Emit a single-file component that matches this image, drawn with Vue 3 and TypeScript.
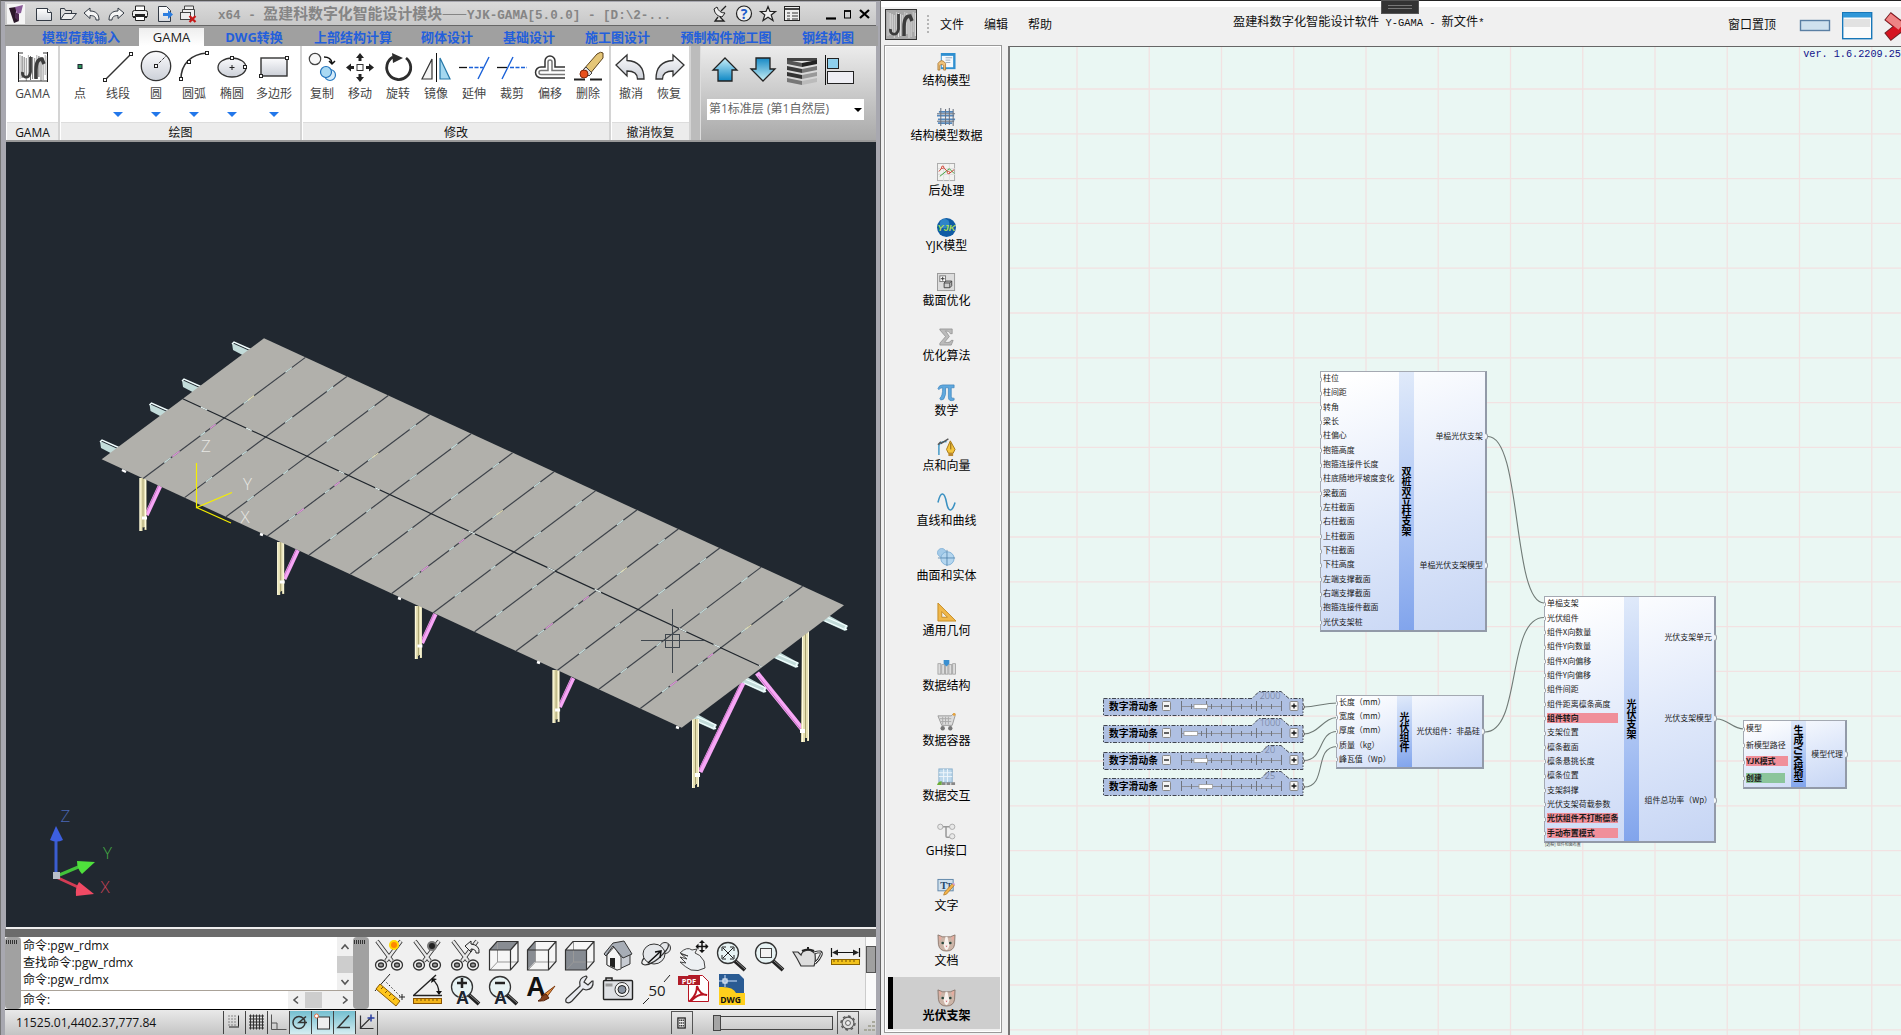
<script setup lang="ts">
interface Tool { icon: string; label: string; drop?: boolean; wide?: boolean }
interface Group { name: string; width: number; tools: Tool[] }
interface Port { text: string; tone?: 'red' | 'green' }
interface GraphNode {
  x: number; y: number; w: number; h: number; left: number
  title: string; inputs: Port[]; outputs: string[]
}
interface Slider { y: number; value: string; thumb: number; tagWide: boolean }

const ports = (s: string): Port[] =>
  s.split('|').map((t) => {
    if (t.startsWith('!')) return { text: t.slice(1), tone: 'red' as const }
    if (t.startsWith('+')) return { text: t.slice(1), tone: 'green' as const }
    return { text: t }
  })

const quickIcons: string[] = [
  '<path d="M1.500 4.500v12h15v-8l-4-4z" fill="url(#paper)" stroke="#333a44"/><path d="M12.500 4.500v4h4" fill="#fff" stroke="#333a44"/>',
  '<path d="M1.500 15.500v-11h4l1 2h6v3" fill="#ddd" stroke="#333a44"/><path d="M1.500 15.500l4-6h12l-5 6z" fill="#eee" stroke="#333a44"/>',
  '<path d="M1 9l6-5v3c6 0 9 3 9 9h-3c0-3-2-4.500-6-4.500v3z" fill="#f4f4f4" stroke="#333a44"/>',
  '<path d="M17 9l-6-5v3c-6 0-9 3-9 9h3c0-3 2-4.500 6-4.500v3z" fill="#f4f4f4" stroke="#333a44"/>',
  '<path d="M4.500 7v-5h9v5" fill="#fff" stroke="#222"/><rect x="1.500" y="6.500" width="15" height="7" rx="2" fill="#eee" stroke="#222"/><path d="M2 13h14M4 11h10" stroke="#222" stroke-width="2"/><path d="M4.500 12.500h9v4h-9z" fill="#fff" stroke="#222"/>',
  '<path d="M3.500 2.500h8l4 4v11h-12z" fill="url(#paper)" stroke="#333a44"/><path d="M8 9h5V6l5 4.500-5 4.500v-3H8z" fill="#2b7de0"/>',
  '<path d="M5.500 6v-4h9v4M3.500 8.500v-3h12v8" fill="#eee" stroke="#444"/><rect x="1.500" y="8.500" width="10" height="7" fill="#eee" stroke="#444"/><path d="M10.500 12l6 6M16.500 12l-6 6" stroke="#c81818" stroke-width="2.200"/>',
]

const titleIcons: string[] = [
  '<path d="M3 5q1 7 8 8l3-4q-6 0-8-6z" fill="#eee" stroke="#222"/><path d="M10 7l5-5M9 13l4 4H4l3-4" fill="#ddd" stroke="#222" stroke-width="1.300"/>',
  '<circle cx="9" cy="9.500" r="7.500" fill="#eee" stroke="#222" stroke-width="1.200"/><text x="9" y="14.500" font-size="14" font-weight="700" fill="#1f5bcb" text-anchor="middle" font-family="Open Sans">?</text>',
  '<path d="M9 2.500l2 5h5.500l-4.300 3.500 1.800 5.500-5-3.300-5 3.300 1.800-5.500L1.500 7.500H7z" fill="#eee" stroke="#222" stroke-width="1.200"/>',
  '<rect x="1.500" y="2.500" width="15" height="14" fill="#eee" stroke="#222"/><path d="M2 5h14" stroke="#444" stroke-width="2"/><path d="M4 9h3M4 12h3M4 15h3M9 9h6M9 12h6M9 15h6" stroke="#333"/>',
]

const tabs = [
  { t: '模型荷载输入', w: 116 }, { t: 'GAMA', w: 65, on: true }, { t: 'DWG转换', w: 100 },
  { t: '上部结构计算', w: 98 }, { t: '砌体设计', w: 90 }, { t: '基础设计', w: 74 },
  { t: '施工图设计', w: 103 }, { t: '预制构件施工图', w: 114 }, { t: '钢结构图', w: 90 },
]

const h = (x: number, y: number) => `<rect x="${x - 1.5}" y="${y - 1.5}" width="3" height="3" fill="#fff" stroke="#222"/>`
const gamaArt = (ink: string) => {
  let s = ''
  for (let i = 0; i < 14; i++) s += `<path d="M${3 + i * 2.1} ${3 + ((i * 5) % 4)}v${24 - ((i * 7) % 5)}" stroke="${ink}" stroke-width=".9" opacity="${0.45 + ((i * 3) % 4) / 8}"/>`
  return s + '<path d="M13.500 5v15q-1 6-5.500 5q-3-1-2.500-5" fill="none" stroke="#3c3c3c" stroke-width="2.800"/><path d="M19 27v-9q0-11 6-11l2 5" fill="none" stroke="#3c3c3c" stroke-width="3.500"/>'
}

const toolArt: Record<string, string> = {
  gama: `<g transform="translate(1 2)"><path d="M1.500 0v30M30.500 0v30" stroke="#111"/><path d="M1 1h5M26 1h5M1 29h30" stroke="#333"/>${gamaArt('#333')}</g>`,
  point: '<rect x="15" y="14.500" width="4" height="4" fill="#2a9a5a" stroke="#223"/>',
  line: `<path d="M4 30L30 4" stroke="#333" stroke-width="1.400"/>${h(4, 30)}${h(30, 4)}`,
  circle: `<circle cx="17" cy="16" r="14.700" fill="url(#steel)" stroke="#333" stroke-width="1.300"/><path d="M17 16L27 6" stroke="#333" stroke-dasharray="3 1.500"/>${h(17, 16)}`,
  arc: `<path d="M4 29C4 14 14 4 30 3" fill="none" stroke="#333" stroke-width="1.600"/>${h(4, 29)}${h(12, 12)}${h(30, 3)}`,
  ellipse: `<ellipse cx="17" cy="17.500" rx="14" ry="9.500" fill="url(#steel)" stroke="#333" stroke-width="1.300"/><path d="M14.500 17.500h5M17 15v5" stroke="#222"/>${h(17, 8)}${h(30, 17)}`,
  rect: `<rect x="4" y="8" width="26" height="18" fill="url(#steel)" stroke="#333" stroke-width="1.400"/>${h(4, 26)}${h(30, 8)}`,
  copy: '<circle cx="10" cy="9" r="5.700" fill="#f8f8f8" stroke="#444" stroke-width="1.200"/><path d="M19 7q7 0 8 6M24 11l3 3 3-3" fill="none" stroke="#111" stroke-width="1.500"/><circle cx="25" cy="25" r="5.500" fill="#d5ecfa" stroke="#2678c0" stroke-width="1.200"/><circle cx="21" cy="22" r="5.500" fill="#a9d9f3" stroke="#1d6fba" stroke-width="1.200"/>',
  move: '<rect x="14" y="14.500" width="6" height="6" fill="#fff" stroke="#333"/><path d="M17 3l4 5h-2.500v3h-3V8H13zM17 32l4-5h-2.500v-3h-3v3H13zM3 17.500l5-4V16h3v3H8v2.500zM31 17.500l-5-4V16h-3v3h3v2.500z" fill="#222"/>',
  rotate: '<path d="M12 7A12 12 0 1 0 25 8" fill="none" stroke="#2d2d2d" stroke-width="2.800"/><path d="M11 3l11 5-10 5z" fill="#2d2d2d"/>',
  mirror: '<path d="M13 9v20H3z" fill="#f4f4f4" stroke="#333" stroke-width="1.200"/><path d="M17.500 3v29" stroke="#111"/><path d="M21 8v21h10z" fill="#a5d8f0" stroke="#2678a8" stroke-width="1.200"/>',
  extend: '<path d="M2 17.500h8" stroke="#111" stroke-width="1.300"/><path d="M12 17.500h14" stroke="#1a61d8" stroke-width="1.300" stroke-dasharray="4 1.500"/><path d="M21 29L32 7" stroke="#1a61d8" stroke-width="1.400"/>',
  trim: '<path d="M2 17.500h10" stroke="#111" stroke-width="1.300"/><path d="M15 17.500h17" stroke="#1a61d8" stroke-width="1.300" stroke-dasharray="4 1.500"/><path d="M7 29L18 7" stroke="#1a61d8" stroke-width="1.400"/>',
  offset: '<path d="M32 17H22V11a5 5 0 0 0-10 0v6H8a5.500 5.500 0 0 0 0 11h24" fill="none" stroke="#333" stroke-width="1.500"/><path d="M32 20.500H19V12a2 2 0 0 0-4 0v8.500H8a2 2 0 0 0 0 4h24" fill="none" stroke="#777" stroke-width="1.500"/>',
  erase: '<path d="M3 29.500h11M19 29.500h12" stroke="#222" stroke-width="2"/><path d="M12 20L26 4q4-3 6-1v5L18 25z" fill="#e5c677" stroke="#5c431d"/><path d="M12 20l3-3 6 6-3 3z" fill="#ddd" stroke="#444"/><circle cx="13" cy="24" r="4" fill="#e8501c" stroke="#84270a"/>',
  undo: '<path d="M2 15L13 5v5.500q17 1 17 18.500h-6.500q0-8-10.500-8v5z" fill="url(#steel)" stroke="#333" stroke-width="1.300"/>',
  redo: '<path d="M32 15L21 5v5.500q-17 1-17 18.500h6.500q0-8 10.500-8v5z" fill="url(#steel)" stroke="#333" stroke-width="1.300"/>',
}

const groups: Group[] = [
  { name: 'GAMA', width: 54, tools: [{ icon: 'gama', label: 'GAMA', wide: true }] },
  { name: '绘图', width: 242, tools: [
    { icon: 'point', label: '点' }, { icon: 'line', label: '线段', drop: true }, { icon: 'circle', label: '圆', drop: true },
    { icon: 'arc', label: '圆弧', drop: true }, { icon: 'ellipse', label: '椭圆', drop: true }, { icon: 'rect', label: '多边形', drop: true, wide: true }] },
  { name: '修改', width: 309, tools: [
    { icon: 'copy', label: '复制' }, { icon: 'move', label: '移动' }, { icon: 'rotate', label: '旋转' }, { icon: 'mirror', label: '镜像' },
    { icon: 'extend', label: '延伸' }, { icon: 'trim', label: '裁剪' }, { icon: 'offset', label: '偏移' }, { icon: 'erase', label: '删除' }] },
  { name: '撤消恢复', width: 80, tools: [{ icon: 'undo', label: '撤消' }, { icon: 'redo', label: '恢复' }] },
]

const bands = [0, 1, 2, 3].map((i) => {
  const y = 5 + i * 6
  return `<path d="M1 ${y}l15 3v4L1 ${y + 4}z" fill="#${['555', '3a3a3a', '333', '777'][i]}"/><path d="M31 ${y}l-15 3v4l15-3z" fill="#${['222', '777', '999', 'bbb'][i]}"/>`
}).join('')
const layerIcons: string[] = [
  '<path d="M16 3L28 15h-5v11H9V15H4z" fill="url(#blueUp)" stroke="#222" stroke-width="1.300"/>',
  '<path d="M16 26L28 14h-5V3H9v11H4z" fill="url(#blueDown)" stroke="#222" stroke-width="1.300"/>',
  `<path d="M1 3h30v3H1z" fill="#444"/>${bands}`,
  '<path d="M1.500 0v30" stroke="#111"/><rect x="3.500" y="3.500" width="11" height="10" fill="#8ed0ee" stroke="#222"/><rect x="3.500" y="16.500" width="26" height="12" fill="#eeeef4" stroke="#222"/>',
]

const lens = '<path d="M19 21l10 9" stroke="#222" stroke-width="4"/><path d="M20 21l9 8" stroke="#888" stroke-width="1"/><circle cx="12" cy="13" r="10.500" fill="#e7f3f4" stroke="#333" stroke-width="1.300"/>'
const snip = (extra: string) => `<path d="M3 1l15 20M27 1L12 21" stroke="#333" stroke-width="4"/><path d="M3 1l15 20M27 1L12 21" stroke="#e8e8e8" stroke-width="2.400"/><g fill="#f2f2f2" stroke="#333" stroke-width="1.300"><ellipse cx="7" cy="25" rx="5.500" ry="5"/><ellipse cx="23" cy="25" rx="5.500" ry="5"/><ellipse cx="7" cy="25" rx="2.500" ry="2" fill="#999"/><ellipse cx="23" cy="25" rx="2.500" ry="2" fill="#999"/></g>${extra}`
const cube = (face: string) => `<path d="M9 1.500h21v20l-7 8.500H1.500V10z" fill="#f6f6f6"/>${face}<path d="M9.500 2v20L2 30M9.500 22H30" stroke="#999" fill="none"/><path d="M9 1.500h21v20l-7.500 8.500H1.500V10zM1.500 10h21v20M22.500 10L30 1.500" fill="none" stroke="#333" stroke-width="1.200"/>`
const dockArt: string[] = [
  snip('<circle cx="20" cy="5" r="5" fill="#ffd900"/><circle cx="20" cy="5" r="3" fill="#f80"/>'),
  snip('<circle cx="20" cy="6" r="5" fill="#777"/><circle cx="20" cy="6" r="3" fill="#222"/>'),
  snip('<path d="M15 6l6-5v3q9 1 8 9h-3q0-4-5-4v3z" fill="#eee" stroke="#222"/>'),
  cube('<path d="M9 1.500h21L22.500 10h-21z" fill="#888c92"/>'),
  cube('<path d="M9 1.500v20L1.500 30V10z" fill="#888c92"/>'),
  cube('<path d="M1.500 10h21v20h-21z" fill="#868b92"/>'),
  '<path d="M5 14v11l10 5 13-6V12z" fill="#c7cbd2" stroke="#333"/><path d="M5 15l7-8 7 10v12l-4 1L5 25z" fill="#f5f5f5" stroke="#444"/><path d="M2 14L11 3l11-2 8 13-9 4-10-12-7 10z" fill="#a7adb6" stroke="#333"/><path d="M8 18h5v10l-5-2z" fill="#222"/>',
  '<circle cx="25" cy="8" r="5.500" fill="#e5e7ea" stroke="#333"/><ellipse cx="14" cy="14" rx="11" ry="10" fill="#e5e7ea" stroke="#333"/><path d="M4 18q-5 6 1 7 9-1 18-11 7-7 5-10" fill="none" stroke="#333" stroke-width="1.200"/><path d="M8 23L21 11M15 12l6-1-1 7" stroke="#111" fill="none" stroke-width="1.500"/>',
  '<path d="M2 13q7-7 12-3l5-1-2 4q5 1 9 8l1 7q-7 4-14 2-6-3-11-8l6 1-6-6 7 2-6-5 7 2z" fill="#edf0f3" stroke="#444"/><path d="M24 1v11M18.500 6.500h11" stroke="#111" stroke-width="1.500"/><path d="M24 0l3 3h-6zM24 13l3-3h-6zM17.500 6.500l3-3v6zM30.500 6.500l-3-3v6z" fill="#111"/>',
  lens + '<path d="M7 8l10 10M17 8L7 18" stroke="#222"/><path d="M6 11V7h4M14 7h4v4M18 15v4h-4M10 19H6v-4" fill="none" stroke="#222"/>',
  lens + '<rect x="6.500" y="8.500" width="11" height="9" fill="#f3f3f3" stroke="#444"/>',
  '<path d="M22 13q9-3 7 2-2 5-6 8" fill="none" stroke="#333" stroke-width="3"/><path d="M9 26q-4-8-8-14h5l3 3q1-4 7-5 5 1 7 4 1 7-1 12z" fill="#ddd" stroke="#333" stroke-width="1.200"/><path d="M10 11q6-3 12 0M16 7v3" stroke="#222" stroke-width="2" fill="none"/><path d="M22 13q9-3 7 2-2 5-6 8" stroke="#f2f2f2" stroke-width="1" fill="none"/>',
  '<path d="M1.500 8v9M29.500 8v9M3 12.500h25" stroke="#111" stroke-width="1.200"/><path d="M2 12.500l6-3v6zM29 12.500l-6-3v6z" fill="#222"/><rect x="1.500" y="19.500" width="28" height="5" fill="#f2c21b" stroke="#8a6300"/><path d="M4 20v2M8 20v2M12 20v2M16 20v2M20 20v2M24 20v2" stroke="#7a5400"/>',
  '<path d="M1 17L16 0" stroke="#222"/><path d="M10 6l17 17" stroke="#222" stroke-dasharray="1.500 2"/><path d="M28 20v6M25 23h6" stroke="#222"/><path d="M6 10l20 17-4 5L2 15z" fill="#ffc61c" stroke="#8a5a00"/><path d="M9 13l-2 2M13 17l-2 2M17 20l-2 2M21 24l-2 2" stroke="#7a5400"/>',
  '<path d="M1 21.500h29M2 21L24 1" stroke="#222" stroke-width="1.400"/><path d="M20 5q7 5 7 15" fill="none" stroke="#222" stroke-width="1.400"/><path d="M19 9l1-5 5 1zM24 17l3 4 3-4z" fill="#111"/><rect x="1.500" y="24.500" width="28" height="5" fill="#f2b41b" stroke="#8a5300"/><path d="M5 25v2M9 25v2M13 25v2M17 25v2M21 25v2M25 25v2" stroke="#7a5400"/>',
  lens + '<path d="M7 9h10M12 4v10" stroke="#222" stroke-width="2.500"/><text x="12.500" y="29.500" font-size="18" font-weight="700" fill="#1c2430" stroke="#fff" stroke-width=".6" paint-order="stroke" text-anchor="middle" font-family="Liberation Sans">A</text>',
  lens + '<path d="M7 9h10" stroke="#222" stroke-width="2.500"/><text x="12.500" y="29.500" font-size="18" font-weight="700" fill="#1c2430" stroke="#fff" stroke-width=".6" paint-order="stroke" text-anchor="middle" font-family="Liberation Sans">A</text>',
  '<text x="10" y="22" font-size="27" font-weight="700" fill="#111" text-anchor="middle" font-family="Liberation Sans">A</text><path d="M29 12l-9 12-3-3z" fill="#e8913c" stroke="#7d3a10"/><path d="M20 20l3 4q-5 4-11 3 4-2 4-5z" fill="#84401c" stroke="#552109"/>',
  '<path d="M2 28q-1-3 2-5L16 12q-2-8 6-10l1 1-3 5 4 3 4-4h1q1 8-7 9l-3-1L8 27q-3 3-6 1z" fill="#e9ebf0" stroke="#333" stroke-width="1.200"/>',
  '<rect x="1.500" y="6.500" width="29" height="19" rx="1" fill="#dfe1e5" stroke="#222" stroke-width="1.400"/><path d="M4 6V4h6v2" fill="none" stroke="#222" stroke-width="1.500"/><rect x="3.500" y="9.500" width="7" height="3" fill="#999"/><circle cx="20" cy="15.500" r="7" fill="#f7f7f7" stroke="#333"/><circle cx="20" cy="15.500" r="4" fill="#8a94a3" stroke="#222"/>',
  '<path d="M3 30l6-6M24 8l6-7" stroke="#222"/><text x="17" y="22" font-size="15" fill="#222" text-anchor="middle" font-family="Open Sans">50</text>',
  '<path d="M10.500 1.500h14l6 6v20h-20z" fill="#fff" stroke="#b81422"/><path d="M13 26q6-6 6-14 3 9 10 9-8-2-15 5z" fill="none" stroke="#b81422" stroke-width="2"/><rect x="0" y="2" width="22" height="9" fill="#b01c28"/><text x="11" y="9.500" font-size="7.500" font-weight="700" fill="#fff" text-anchor="middle" font-family="Open Sans">PDF</text>',
  '<path d="M3 0h20l5 5v25H3z" fill="#2a5b93"/><path d="M3 13q14-1 17 6h9v12H3z" fill="#ffcf1c"/><path d="M9 1v12M3 7h18" stroke="#cfe4ff"/><rect x="7" y="5" width="4" height="4" fill="none" stroke="#fff"/><text x="14.500" y="28.500" font-size="8.500" font-weight="700" fill="#111" text-anchor="middle" font-family="Open Sans">DWG</text>',
]
const dockRows = [dockArt.slice(0, 13), dockArt.slice(13)]

const statusArt = [
  { on: false, art: '<path d="M5 4v11M8 4v11M11 4v11" stroke="#333" stroke-dasharray="1 2"/><path d="M14.500 4v11M5 15.500h10" stroke="#222"/>' },
  { on: false, art: '<path d="M4.500 3v15M7.500 3v15M10.500 3v15M13.500 3v15M16.500 3v15M3 4.500h15M3 7.500h15M3 10.500h15M3 13.500h15M3 16.500h15" stroke="#333"/>' },
  { on: false, art: '<path d="M3.500 3v15h15M4 11.500h5v6" fill="none" stroke="#555"/>' },
  { on: true, art: '<circle cx="9" cy="11" r="6" fill="none" stroke="#333" stroke-width="1.500"/><path d="M16 5L9 11h8" fill="none" stroke="#333" stroke-width="1.500"/>' },
  { on: true, art: '<rect x="5.500" y="5.500" width="12" height="12" fill="#eee" stroke="#333"/><circle cx="4.500" cy="4.500" r="2" fill="#fff" stroke="#e0704a"/>' },
  { on: true, art: '<path d="M15 4L4 16h12" fill="none" stroke="#333" stroke-width="1.500"/>' },
  { on: false, art: '<path d="M4.500 4v13h13M4 17L14 7" fill="none" stroke="#333" stroke-width="1.200"/><path d="M15 3v7M11.500 6.500h7" stroke="#2a3ea0" stroke-width="1.500"/>' },
]

const cat = '<path d="M1 2l5 2h8l5-2-.5 10q-1 7-8.500 7t-8.500-7z" fill="#ccb5a8" stroke="#7d675c" stroke-width=".8"/><path d="M9 4h2l2 9q-1 5-3 5t-3-5z" fill="#f8f2ee"/><path d="M2 3l3 2-2 4zM18 3l-3 2 2 4z" fill="#e9ab9f"/><circle cx="6" cy="10.500" r="1.400" fill="#2e4a40"/><circle cx="14" cy="10.500" r="1.400" fill="#2e4a40"/><path d="M9 13.500h2l-1 1.500z" fill="#c56"/>'
const sideItems = [
  { t: '结构模型', a: '<rect x="4" y="0" width="15.500" height="17" fill="#2e8fd0"/><rect x="5" y="3" width="12" height="12" fill="#f4f9fd"/><path d="M9 5h7M9 7.500h5M9 10h5" stroke="#9ab"/><path d="M1 18V11q4-6 8 0v7H7v-5q-2-2-4 0v5z" fill="#f0c279" stroke="#a4702c" stroke-width=".8"/>' },
  { t: '结构模型数据', a: '<path d="M2 4h15M0 8h18M1 12h18M1 16h15" stroke="#5488bd" stroke-width="1.800"/><path d="M4 0v19M9 1v17M13 0v18M17 1v18M0 6h19M0 14h18" stroke="#6b7380" stroke-width="1.100"/>' },
  { t: '后处理', a: '<rect x=".5" y=".5" width="18" height="18" fill="#f2f2f0" stroke="#aaa"/><path d="M1 6h18M1 12h18M7 1v18M13 1v18" stroke="#ddd"/><path d="M3 14l10-8 5 5" fill="none" stroke="#3ba13b"/><path d="M2 9l4-5 7 7 5-4" fill="none" stroke="#d03a2c"/><g fill="#fff" stroke="#d03a2c"><circle cx="6" cy="4.500" r="1.200"/><circle cx="12" cy="10" r="1.200"/></g>' },
  { t: 'YJK模型', a: '<circle cx="10" cy="10" r="10" fill="#0f5ba4"/><circle cx="8" cy="6" r="5" fill="#2e84c8"/><text x="10" y="14" font-size="10" font-weight="700" font-style="italic" fill="#a9dc5a" text-anchor="middle" font-family="Liberation Sans">YJK</text>' },
  { t: '截面优化', a: '<rect x=".5" y=".5" width="18" height="18" fill="#ddd" stroke="#999"/><rect x="3" y="3" width="6" height="6" fill="#fff" stroke="#777"/><path d="M6 4v4M4 6h4" stroke="#333"/><path d="M7.500 10.500h6v5h-6zM7.500 10.500l2-2h6l-2 2M15.500 8.500v5l-2 2" fill="#ccc" stroke="#444"/>' },
  { t: '优化算法', a: '<path d="M3 1h13v5h-2q-1-3-5-3l4 6-5 6q6 1 7-2h2l-2 5H3v-2l6-7-6-7z" fill="#bbb" stroke="#888" stroke-width=".7"/>' },
  { t: '数学', a: '<path d="M1 6q1-4 5-4h12v3h-3v9q0 3 3 2v2q-6 2-6-3V5H9q1 8-2 12-4 2-4-1 3-2 3-11-3 0-4 2z" fill="#5fa8de" stroke="#3a80ba" stroke-width=".7"/>' },
  { t: '点和向量', a: '<path d="M2 18V8q2-5 8-4" fill="none" stroke="#3c95c5" stroke-width="1.500"/><path d="M1 7l3-3M4 6l8-5" stroke="#555" stroke-width="1.500"/><path d="M14 3l5 9-2 4h-5l-2-4z" fill="#f5c63e" stroke="#a87714"/><path d="M12 16h5v3h-5z" fill="#b88630"/><path d="M14.500 5v7" stroke="#855d12"/>' },
  { t: '直线和曲线', a: '<path d="M1 10C4-3 8-1 10 10S16 20 19 10" fill="none" stroke="#3a91c2" stroke-width="1.600"/>' },
  { t: '曲面和实体', a: '<circle cx="5" cy="5" r="4.500" fill="#a4cbe9" stroke="#8ab5d8"/><circle cx="11" cy="11" r="7" fill="#b4d6ef" stroke="#82b2d8"/><path d="M10.500 2v17M1 10.500h18" stroke="#477ca6" stroke-width=".8"/>' },
  { t: '通用几何', a: '<path d="M1 0v19h19z" fill="#f0b84b" stroke="#c58b24"/><path d="M5 9v6h6z" fill="#f0f0f0" stroke="#c58b24"/>' },
  { t: '数据结构', a: '<g fill="#ddd" stroke="#999" stroke-width=".8"><rect x="1" y="6" width="3" height="11"/><rect x="5" y="7" width="3" height="10"/><rect x="9" y="6" width="2.500" height="11"/><rect x="12.500" y="7" width="3" height="10"/><rect x="16.500" y="6" width="3" height="11"/></g><path d="M7 2h6v4l-3 3-3-3z" fill="#3a8fd0"/>' },
  { t: '数据容器', a: '<path d="M1 3h14l2-2h2v2l-3 10H5z" fill="#ddd" stroke="#999"/><path d="M3 6h12M4 9h11M6 4v8M9 4v8M12 4v8" stroke="#aaa"/><circle cx="6" cy="16" r="2.300" fill="#777"/><circle cx="14" cy="16" r="2.300" fill="#777"/><circle cx="18" cy="1.500" r="1.500" fill="#e8a33b"/>' },
  { t: '数据交互', a: '<rect x="2" y="1" width="14" height="14" fill="#bcd8ec" stroke="#8ab0cc"/><path d="M2 5h14M2 9h14M7 1v14M11 1v14" stroke="#eef6fb"/><path d="M0 18q1-4 5-4v4z" fill="#6cae37"/><path d="M5 16.500h14" stroke="#888" stroke-width="3" stroke-dasharray="4 1"/>' },
  { t: 'GH接口', a: '<path d="M4 4h12M9.500 4v10q0 1 1 1h5" fill="none" stroke="#999" stroke-width="1.600"/><g fill="#e8e8e8" stroke="#aaa"><circle cx="3.500" cy="4" r="2.800"/><circle cx="16" cy="4" r="2.800"/><circle cx="16" cy="14" r="2.800"/></g>' },
  { t: '文字', a: '<rect x="1" y="1.500" width="16" height="12" fill="#cfe0ee" stroke="#5f85a8"/><text x="7" y="12" font-size="11" font-weight="700" fill="#24486c" text-anchor="middle" font-family="Liberation Serif">T</text><text x="13" y="12" font-size="8" font-weight="700" fill="#24486c" text-anchor="middle" font-family="Liberation Serif">T</text><path d="M7 18l1-3 8-9 2 2-8 9z" fill="#f3b44c" stroke="#a86c18" stroke-width=".7"/><path d="M16 6l2-1 1 2-1 1z" fill="#d99ad0"/>' },
  { t: '文档', a: cat },
  { t: '光伏支架', a: cat, on: true },
]

/* ---- 3D model ---- */
const cols = 14
const seams = Array.from({ length: cols - 1 }, (_, i) => {
  const k = i + 1
  return { x1: 264 + k * 41.43, y1: 338.3 + k * 19.07, x2: 101.7 + k * 41.43, y2: 459.3 + k * 19.17, k }
})
const frames = [0, 1, 2, 3].map((k) => ({ dx: k * 137.7, dy: k * 64 }))
const leftBeams = [[232, 343], [182, 380], [149.5, 404], [100, 441]]
const rightBeams = [[823, 617], [774, 654], [742, 679], [692, 716]]

/* ---- node graph ---- */
const nodes: GraphNode[] = [
  { x: 1320, y: 371, w: 167, h: 261, left: 79, title: '双桩双立柱支架',
    inputs: ports('柱位|柱间距|转角|梁长|柱偏心|抱箍高度|抱箍连接件长度|柱底随地坪坡度变化|梁截面|左柱截面|右柱截面|上柱截面|下柱截面|下柱高度|左端支撑截面|右端支撑截面|抱箍连接件截面|光伏支架桩'),
    outputs: ['单榀光伏支架', '单榀光伏支架模型'] },
  { x: 1336, y: 695, w: 148, h: 74, left: 61, title: '光伏组件',
    inputs: ports('长度（mm）|宽度（mm）|厚度（mm）|质量（kg）|峰瓦值（Wp）'), outputs: ['光伏组件：非晶硅'] },
  { x: 1544, y: 596, w: 172, h: 247, left: 80, title: '光伏支架',
    inputs: ports('单榀支架|光伏组件|组件X向数量|组件Y向数量|组件X向偏移|组件Y向偏移|组件间距|组件距离檩条高度|!组件转向|支架位置|檩条截面|檩条悬挑长度|檩条位置|支架斜撑|光伏支架荷载参数|!光伏组件不打断檩条|!手动布置模式'),
    outputs: ['光伏支架单元', '光伏支架模型', '组件总功率（Wp）'] },
  { x: 1743, y: 720, w: 104, h: 69, left: 48, title: '生成YJK模型',
    inputs: ports('模型|新模型路径|!YJK模式|+创建'), outputs: ['模型代理'] },
]

const sliders: Slider[] = [
  { y: 689, value: '2000', thumb: 91, tagWide: true },
  { y: 716, value: '1000', thumb: 81, tagWide: true },
  { y: 742.5, value: '20', thumb: 91, tagWide: false },
  { y: 769, value: '25', thumb: 96, tagWide: false },
]
const outline = (s: Slider) =>
  s.tagWide ? 'M.5 9.500H149l7-7h22l8 7h14v17H.5z' : 'M.5 9.500H158l7-7h13l8 7h14v17H.5z'
const majors = [78, 103, 128, 153, 178]
const minors = [88, 98, 108, 118, 138, 148, 158, 168]
const wires = [
  'M1488 436.500C1522 436.500 1512 603 1544 603', 'M1485 732C1522 732 1506 617.500 1544 617.500',
  'M1304 707C1316 707 1324 703 1337 703', 'M1304 734C1318 734 1324 717.500 1337 717.500',
  'M1304 760.500C1324 760.500 1318 731.500 1337 731.500', 'M1304 787C1328 787 1313 746.500 1337 746.500',
  'M1717 719C1728 719 1732 729 1744 729',
]
const gridV = Array.from({ length: 12 }, (_, i) => 1077 + i * 72.25)
const gridH = Array.from({ length: 22 }, (_, i) => 89 + i * 44.8)
</script>

<template>
  <div class="screen">
    <svg class="defs" width="0" height="0">
      <defs>
        <linearGradient id="steel" x1="0" y1="0" x2="0" y2="1"><stop offset="0" stop-color="#fbfbfd" /><stop offset="1" stop-color="#ccd0d8" /></linearGradient>
        <linearGradient id="paper" x1="0" y1="0" x2="0" y2="1"><stop offset="0" stop-color="#fff" /><stop offset="1" stop-color="#d5d8dd" /></linearGradient>
        <linearGradient id="blueUp" x1="0" y1="0" x2="0" y2="1"><stop offset="0" stop-color="#c9f0fa" /><stop offset="1" stop-color="#0d87c4" /></linearGradient>
        <linearGradient id="blueDown" x1="0" y1="0" x2="0" y2="1"><stop offset="0" stop-color="#1689c6" /><stop offset="1" stop-color="#c9f0f4" /></linearGradient>
      </defs>
    </svg>

    <section class="cad">
      <header class="cad-title">
        <svg class="app-logo" viewBox="0 0 18 20"><rect width="18" height="20" fill="#f5f5f5" /><path d="M2 4l7-1v10l3 4-5 2-2-6z" fill="#2a1828" /><path d="M8 3l8-2-2 8-4 1z" fill="#8a5b98" /><path d="M8 8l4 2v7l-4-3z" fill="#4d2b50" /></svg>
        <div class="quick"><svg v-for="(a, i) in quickIcons" :key="i" viewBox="0 0 18 19" v-html="a" /></div>
        <div class="cad-name"><span class="lat">x64 - </span>盈建科数字化智能设计模块<span class="dash">——</span><span class="lat">YJK-GAMA[5.0.0] - [D:\2-...</span></div>
        <div class="title-icons"><svg v-for="(a, i) in titleIcons" :key="i" viewBox="0 0 18 19" v-html="a" /></div>
        <svg class="win-btns" width="46" height="14" viewBox="0 0 46 14"><path d="M1 11.500h10" stroke="#000" stroke-width="2.200" /><rect x="19.500" y="4" width="6" height="7" fill="none" stroke="#000" /><path d="M19 4h7" stroke="#000" stroke-width="1.600" /><path d="M35 3l9 8M44 3l-9 8" stroke="#000" stroke-width="2.200" /></svg>
      </header>
      <nav class="tabs"><span v-for="t in tabs" :key="t.t" :class="{ on: t.on }" :style="{ width: t.w + 'px' }">{{ t.t }}</span></nav>
      <div class="ribbon">
        <div v-for="g in groups" :key="g.name" class="group" :style="{ width: g.width + 'px' }">
          <div class="tools" :class="{ mid: g.tools.length === 1 }">
            <div v-for="t in g.tools" :key="t.label" class="tool" :class="{ wide: t.wide }">
              <svg viewBox="0 0 34 34" v-html="toolArt[t.icon]" />
              <span>{{ t.label }}</span>
              <i v-if="t.drop" />
            </div>
          </div>
          <div class="group-name">{{ g.name }}</div>
        </div>
        <div class="gap" />
        <div class="layers">
          <div class="layer-icons"><svg v-for="(a, i) in layerIcons" :key="i" viewBox="0 0 32 30" v-html="a" /></div>
          <div class="combo"><span>第1标准层 (第1自然层)</span><i /></div>
        </div>
      </div>

      <svg class="view" width="870" height="785" viewBox="6 142 870 785">
        <rect x="6" y="142" width="870" height="785" fill="#212830" />
        <g v-for="(b, i) in leftBeams" :key="'l' + i" :transform="`translate(${b[0]} ${b[1]})`">
          <path d="M0 0l20 9v8L1 7z" fill="#c3dcda" /><path d="M0 1l2-2 20 9" stroke="#f2ffff" fill="none" stroke-width="1.400" />
        </g>
        <g v-for="(b, i) in rightBeams" :key="'r' + i" :transform="`translate(${b[0]} ${b[1]})`">
          <path d="M0 0l5-2 20 11-3 5L0 4z" fill="#c3dcda" /><path d="M3 0l21 9M2 4l21 9M24 8l-2 3 2 2" stroke="#f2ffff" fill="none" stroke-width="1.200" />
        </g>
        <g v-for="(f, i) in frames" :key="'f' + i" :transform="`translate(${f.dx} ${f.dy})`">
          <path d="M160 486l-13.500 29" stroke="#f7a6f6" stroke-width="4.500" /><path d="M158.500 486l-13 28" stroke="#c673c4" stroke-width="1" />
          <path d="M139.500 478h7v52h-2v-3h-2v4h-3z" fill="#e6e0b4" /><path d="M140 478v53M145.500 478v51" stroke="#fffce0" /><path d="M143 478v50" stroke="#a9a370" />
          <path d="M142 518h5" stroke="#fff" stroke-width="3" />
        </g>
        <path d="M743 683l-43 89" stroke="#f7a6f6" stroke-width="5" /><path d="M741 683l-42 87" stroke="#c673c4" />
        <path d="M757 673l46 57" stroke="#f7a6f6" stroke-width="5" /><path d="M758 676l44 55" stroke="#c673c4" />
        <path d="M692 719h7v68h-2v-3h-2v4h-3z" fill="#e6e0b4" /><path d="M692.500 719v69M698.500 719v67" stroke="#fffce0" /><path d="M695.500 719v66" stroke="#a9a370" />
        <path d="M802 632h7v109h-2v-3h-2v4h-4z" fill="#e6e0b4" /><path d="M802.500 632v110M808.500 630v110" stroke="#fffce0" /><path d="M805.500 632v106" stroke="#a9a370" />
        <path d="M695 775h5M800 731h5" stroke="#fff" stroke-width="4" />
        <path d="M264 338.300L844 605.300 681.700 727.700 101.700 459.300z" fill="#b1b0ab" />
        <g v-for="s in seams" :key="s.k">
          <line :x1="s.x1" :y1="s.y1" :x2="s.x2" :y2="s.y2" stroke="#3e434a" stroke-width="1.200" />
          <line :x1="s.x1" :y1="s.y1" :x2="s.x2" :y2="s.y2" stroke="#c6dcda" stroke-width="1.300" stroke-dasharray="0 17 8 43 9 48 6 37 8 40" />
          <line v-if="s.k % 3 === 1" :x1="s.x1" :y1="s.y1" :x2="s.x2" :y2="s.y2" stroke="#d996d6" stroke-width="1.300" stroke-dasharray="0 112 7 38 9 60" />
          <line v-if="s.k % 3 === 1" :x1="s.x1" :y1="s.y1" :x2="s.x2" :y2="s.y2" stroke="#ded9b4" stroke-width="1.300" stroke-dasharray="0 64 8 200" />
        </g>
        <path d="M182.700 398.700L761.700 666.700" stroke="#1e242b" stroke-width="1.200" />
        <path d="M182.700 398.700L761.700 666.700" stroke="#e2efed" stroke-width="1.200" stroke-dasharray="0 20 7 43 6 96 6 34 5 98 7 80 8 44 7 86 8 10" />
        <path d="M122 470l4 2M260 534l3 1M398 598l3 1M537 662l3 1M676 727l3 1" stroke="#fff" stroke-width="2.500" />
        <path d="M196.500 463v44.500l35.500-15M196.500 507.500l34.500 15.500" fill="none" stroke="#f5ee00" stroke-width="1.200" />
        <g class="axis" fill="#e7e7e3"><text x="201" y="452">Z</text><text x="243" y="490">Y</text><text x="240.500" y="523">X</text></g>
        <path d="M641 640.500h63M672.500 609v64" stroke="#40474e" /><rect x="665.500" y="634.500" width="14" height="13" fill="none" stroke="#40474e" />
        <path d="M56 836v40" stroke="#3b5dd0" stroke-width="3" /><path d="M50 840l6-14 7 14q-6 3-13 0z" fill="#3d5fe0" />
        <path d="M57 876l26-11" stroke="#43c23b" stroke-width="3" /><path d="M77 861l18 1-13 12q-5-5-5-13z" fill="#4fe03c" />
        <path d="M56 877l24 11" stroke="#d43c54" stroke-width="3" /><path d="M79 882l15 12-18 2q-1-8 3-14z" fill="#f04a64" />
        <rect x="53" y="872" width="7" height="7" fill="#b9bfc8" />
        <g class="axis"><text x="60.500" y="822" fill="#4a67b5">Z</text><text x="103" y="859" fill="#45a945">Y</text><text x="100.500" y="893" fill="#c44257">X</text></g>
      </svg>

      <div class="strip" />
      <div class="dock">
        <div class="grip"><i /></div>
        <div class="cmd">
          <div class="log">
            <div class="lines"><p>命令:pgw_rdmx</p><p>查找命令:pgw_rdmx</p><p>命令:pgw_rdmx</p></div>
            <div class="vscroll"><svg viewBox="0 0 16 52" width="16" height="52"><rect y="19" width="16" height="17" fill="#cdcdcd" /><path d="M4.500 12l3.500-4 3.500 4M4.500 43l3.500 4 3.500-4" fill="none" stroke="#555" stroke-width="1.600" /></svg></div>
          </div>
          <div class="prompt"><span>命令:</span><svg viewBox="0 0 65 18" width="65" height="18"><rect width="65" height="18" fill="#f0f0f0" /><rect x="17" y="1" width="17" height="16" fill="#cdcdcd" /><path d="M10 5.500L6 9l4 3.500M55 5.500L59 9l-4 3.500" fill="none" stroke="#555" stroke-width="1.600" /></svg></div>
        </div>
        <div class="grip"><i /></div>
        <div class="palette">
          <div v-for="(r, i) in dockRows" :key="i" class="prow"><svg v-for="(a, j) in r" :key="j" viewBox="0 0 32 32" v-html="a" /></div>
        </div>
        <div class="pscroll"><i /></div>
      </div>
      <footer class="status">
        <span class="coords">11525.01,4402.37,777.84</span>
        <div class="toggles"><svg v-for="(s, i) in statusArt" :key="i" :class="{ on: s.on }" viewBox="0 0 21 22" v-html="s.art" /></div>
        <div class="status-right">
          <svg class="sbtn" viewBox="0 0 22 23" width="22" height="23"><rect x="6.500" y="6" width="8" height="11" fill="#eee" stroke="#222" stroke-width="1.400" /><path d="M8 8.500h5M8 11.500h5M8 14.500h5" stroke="#222" stroke-width="1.600" stroke-dasharray="1.300 .7" /></svg>
          <div class="scale"><i /></div>
          <svg class="sbtn" viewBox="0 0 22 23" width="22" height="23"><circle cx="11" cy="11.500" r="6.500" fill="#ddd" stroke="#555" stroke-width="1.200" /><circle cx="11" cy="11.500" r="7.700" fill="none" stroke="#555" stroke-width="1.500" stroke-dasharray="3 3" /><circle cx="11" cy="11.500" r="2.700" fill="#eee" stroke="#555" /></svg>
          <svg class="corner" width="14" height="14" viewBox="0 0 14 14"><path d="M10 2h3M6 6h3M10 6h3M2 10h3M6 10h3M10 10h3" stroke="#a8a89c" stroke-width="2" /></svg>
        </div>
      </footer>
    </section>

    <section class="gama">
      <header class="menu">
        <svg class="g-logo" viewBox="0 0 32 31"><rect x=".5" y=".5" width="31" height="30" fill="#a8a8a8" stroke="#333" /><g v-html="gamaArt('#fff')" /></svg>
        <i class="dots" />
        <span class="mi">文件</span><span class="mi">编辑</span><span class="mi">帮助</span>
        <div class="g-title">盈建科数字化智能设计软件<span class="lat"> Y-GAMA - </span>新文件<span class="lat">*</span></div>
        <span class="pin">窗口置顶</span>
        <svg class="g-btns" width="102" height="34" viewBox="1799 9 102 34">
          <rect x="1800.500" y="20.500" width="29" height="10" fill="#cfe1ee" stroke="#5a7fa3" stroke-width="1.400" />
          <rect x="1842.700" y="12.700" width="29" height="26" fill="#fbfbfb" stroke="#1777b8" stroke-width="1.400" /><rect x="1843" y="13" width="28" height="4.500" fill="#2f97d8" /><rect x="1844" y="19" width="26" height="8" fill="#e2e2e2" />
          <path d="M1887.500 16L1914 37M1914 16L1887.500 37" stroke="#6e2226" stroke-width="10.500" />
          <path d="M1888.200 16.600L1914 37M1914 16L1888.200 36.400" stroke="#d51420" stroke-width="8.500" />
          <path d="M1888.200 16.600L1901 26.500" stroke="#ee8484" stroke-width="8" />
        </svg>
        <div class="notch"><i /><i /></div>
      </header>
      <div class="body">
        <aside class="side">
          <div class="side-list">
            <div v-for="s in sideItems" :key="s.t" class="item" :class="{ on: s.on }">
              <svg viewBox="0 0 20 20" v-html="s.a" /><span>{{ s.t }}</span>
            </div>
          </div>
        </aside>
        <main class="graph">
          <svg class="backdrop" width="891" height="988" viewBox="1010 47 891 988">
            <path v-for="x in gridV" :key="'v' + x" :d="`M${x} 47V1035`" stroke="#f2e2e2" stroke-width="1.300" />
            <path v-for="y in gridH" :key="'h' + y" :d="`M1010 ${y}H1901`" stroke="#f2e2e2" stroke-width="1.300" />
            <path v-for="w in wires" :key="w" :d="w" fill="none" stroke="#707a76" stroke-width="1.100" />
          </svg>
          <span class="ver">ver. 1.6.2209.25</span>
          <div v-for="n in nodes" :key="n.title" class="node" :style="{ left: n.x - 1010 + 'px', top: n.y - 47 + 'px', width: n.w + 'px', height: n.h + 'px' }">
            <div class="ins" :style="{ width: n.left - 1 + 'px' }"><div v-for="p in n.inputs" :key="p.text" class="in"><b /><span :class="p.tone">{{ p.text }}</span></div></div>
            <div class="band"><span>{{ n.title }}</span></div>
            <div class="outs"><div v-for="o in n.outputs" :key="o" class="out"><span>{{ o }}</span><b /></div></div>
          </div>
          <span class="foot">[远程] 组件和面布置</span>
          <svg v-for="s in sliders" :key="s.y" class="slider" width="203" height="28" viewBox="0 0 203 28" :style="{ left: '93px', top: s.y - 47 + 'px' }">
            <path :d="outline(s)" fill="#afc0e2" stroke="#40454f" stroke-dasharray="4 1.500 1.500 1.500" />
            <text x="6" y="20.500" class="s-name">数字滑动条</text>
            <text :x="167" y="10" class="s-val">{{ s.value }}</text>
            <path d="M78 17.500h100" stroke="#8f929b" />
            <path v-for="m in majors" :key="m" :d="`M${m}.500 12v10`" stroke="#70757f" />
            <path v-for="m in minors" :key="m" :d="`M${m}.500 15v5`" stroke="#70757f" />
            <rect :x="s.thumb" y="15.500" width="13.500" height="4" fill="#fff" stroke="#999" stroke-width=".8" />
            <rect x="59.500" y="12.500" width="8" height="9" rx="1" fill="#f4f4f4" stroke="#888" /><path d="M61 17h5" stroke="#111" stroke-width="1.300" />
            <rect x="187" y="12.500" width="8" height="9" rx="1" fill="#f4f4f4" stroke="#888" /><path d="M188.500 17h5M191 14.500v5" stroke="#111" stroke-width="1.300" />
            <path d="M200 15q3 3 0 6" fill="#eef3f2" stroke="#555" />
          </svg>
        </main>
      </div>
    </section>
  </div>
</template>

<style>
html, body { margin: 0; overflow: hidden; }
</style>

<style scoped>
.screen { width: 1901px; height: 1035px; display: flex; overflow: hidden; position: relative; background: #f0f0f0; font: 12px/1.2 "Open Sans", "Noto Sans CJK SC", sans-serif; color: #111; }
.defs { position: absolute; }
.cad { width: 881px; height: 1035px; box-sizing: border-box; padding: 1px 4px 0 4px; border-left: 1px solid #777; background: #a8a8b0; display: flex; flex-direction: column; border-top: 1px solid #555; flex: none; border-right: 1px solid #666; }
.cad-title { height: 23px; background: linear-gradient(#dadada, #c8c8c8); display: flex; align-items: center; border-bottom: 1px solid #666; position: relative; }
.app-logo { width: 18px; height: 20px; margin-left: 2px; }
.quick { display: flex; gap: 6px; margin-left: 10px; }
.quick svg, .title-icons svg { width: 18px; height: 19px; overflow: visible; }
.cad-name { margin-left: 21px; width: 480px; font-size: 14.900px; font-weight: 700; color: #858585; white-space: pre; font-family: "Noto Sans CJK SC", sans-serif; flex: none; }
.cad-name .lat { font: 700 12.600px "Liberation Mono", monospace; }
.dash { font-weight: 400; }
.title-icons { display: flex; gap: 6px; margin-left: 13px; }
.win-btns { margin-left: 24px; }
.tabs { height: 20px; flex: none; padding-left: 18px; background: #a0a0a0; display: flex; align-items: flex-end; width: 855px; color: #235fdc; font-weight: 700; font-size: 13px; }
.tabs span { text-align: center; height: 18px; line-height: 18px; white-space: nowrap; }
.tabs .on { background: linear-gradient(#eee, #fff); color: #222; font-weight: 400; }
.ribbon { height: 94px; flex: none; display: flex; background: #fff; border-bottom: 2px solid #999; margin-left: 1px; }
.group { box-sizing: border-box; border-right: 2px solid #d4d4d4; border-left: 1px solid #fff; display: flex; flex-direction: column; flex: none; }
.tools { flex: 1; display: flex; justify-content: flex-start; padding-top: 4px; min-height: 0; }
.tools.mid { justify-content: center; }
.tool { width: 38px; display: flex; flex-direction: column; align-items: center; color: #444; }
.tool.wide { width: 46px; }
.tool svg { width: 34px; height: 34px; flex: none; }
.tool span { margin-top: 2px; line-height: 16px; white-space: nowrap; }
.tool i { margin-top: 10px; border: 5px solid transparent; border-top: 5px solid #2277ea; border-bottom: 0; }
.group-name { height: 17px; line-height: 20px; text-align: center; background: #ececec; border-top: 1px solid #ddd; flex: none; }
.gap { width: 9px; background: #bcbcbc; border-right: 1px solid #ddd; }
.layers { flex: 1; background: linear-gradient(#ececec, #a9a9a9); display: flex; flex-direction: column; }
.layer-icons { display: flex; gap: 6.400px; padding: 9px 0 0 8px; }
.layer-icons svg { width: 32px; height: 30px; }
.combo { margin: 14px 0 0 6px; width: 157px; height: 21px; background: #fff; color: #666; display: flex; align-items: center; justify-content: space-between; box-sizing: border-box; padding: 0 2px; }
.combo i { border: 4px solid transparent; border-top-color: #000; border-bottom: 0; }
.view { flex: none; margin: 0 0 0 1px; display: block; border-top: 0; border-bottom: 2px solid #eee; }
.axis { font: 300 17px "Open Sans", sans-serif; }
.strip { height: 8px; background: #6b6b6b; flex: none; }
.dock { height: 72px; flex: none; display: flex; background: #f0f0f0; border-bottom: 1px solid #000; }
.grip { width: 16px; background: #a1a1a1; flex: none; border-radius: 4px; padding-top: 3px; box-sizing: border-box; }
.grip i { display: block; margin-left: 1px; width: 12px; height: 4px; background: repeating-linear-gradient(90deg, #333 0 1px, transparent 1px 2px); }
.cmd { width: 332px; background: #fff; display: flex; flex-direction: column; flex: none; }
.log { height: 53px; display: flex; justify-content: space-between; border-bottom: 1px solid #aaa298; }
.log p { margin: 0; height: 17.200px; line-height: 17px; padding-left: 2px; }
.lines { font-size: 12.100px; }
.vscroll { width: 16px; background: #f0f0f0; }
.prompt { height: 18px; display: flex; justify-content: space-between; align-items: center; padding-left: 2px; }
.palette { width: 496px; flex: none; }
.prow { display: flex; gap: 6px; padding: 3px 0 0 5px; height: 31px; }
.prow svg { width: 32px; height: 32px; flex: none; overflow: visible; }
.pscroll { flex: 1; background: #fafafa; border-left: 1px solid #ccc; }
.pscroll i { display: block; height: 25px; margin-top: 9px; background: #a0a0a0; border: 1px solid #555; }
.status { flex: 1; display: flex; background: linear-gradient(#e9e9e9, #c4c4c4); position: relative; }
.coords { width: 207px; padding-left: 11px; line-height: 25px; font-size: 12.100px; }
.toggles { display: flex; margin-top: 1px; border-right: 1px solid #444; }
.toggles svg { width: 21px; height: 23px; border-left: 1px solid #444; }
.toggles .on { background: linear-gradient(#74bfd0, #d5edf1); }
.status-right { margin-left: 293px; display: flex; align-items: center; }
.sbtn { border: 1px solid #555; border-bottom: 0; box-sizing: border-box; }
.scale { margin: 0 4px 0 20px; width: 120px; height: 14px; border: 1px solid #444; box-sizing: border-box; }
.scale i { display: block; width: 6px; height: 14px; background: #a5a5a5; border: 1px solid #444; margin: -2px 0 0 -1px; }
.corner { margin: 8px 0 0 3px; }

.gama { flex: 1; display: flex; flex-direction: column; border-top: 1px solid #222; background: #f0f0f0; position: relative; min-width: 0; }
.menu { height: 39px; flex: none; border-top: 6px solid #fff; display: flex; align-items: center; font-size: 12px; }
.g-logo { width: 32px; height: 31px; margin: -4px 0 0 4px; flex: none; }
.dots { width: 3px; height: 19px; margin: -5px 11px 0 10px; background: repeating-linear-gradient(#b5b5b5 0 2px, transparent 2px 4px); }
.mi { width: 44px; margin-top: -3px; flex: none; }
.g-title { margin: -11px 0 0 161px; width: 495px; white-space: pre; font-size: 12.200px; font-family: "Noto Sans CJK SC", sans-serif; flex: none; }
.g-title .lat { font: 10.400px "Liberation Mono", monospace; }
.pin { width: 71px; flex: none; margin-top: -3px; }
.g-btns { flex: none; margin-top: -1px; }
.notch { position: absolute; left: 501px; top: 0; width: 36px; height: 12px; background: #333; display: flex; flex-direction: column; align-items: center; gap: 1px; box-shadow: 0 0 0 1px #555; }
.notch i { width: 24px; height: 1px; background: #777; margin-top: 1px; }
.notch i:first-child { margin-top: 4px; }
.body { flex: 1; display: flex; min-height: 0; }
.side { width: 118px; flex: none; margin: -1px 6px 0 3px; border: 1px solid #999; box-shadow: inset 1px 1px #fff, inset -1px -1px #fff; box-sizing: border-box; height: 988px; }
.side-list { display: flex; flex-direction: column; gap: 3px; margin: -4px 0 0 3px; width: 112px; }
.item { height: 52px; display: flex; flex-direction: column; align-items: center; padding-left: 5px; box-sizing: border-box; }
.item svg { width: 19px; height: 19px; margin-top: 11px; }
.item span { line-height: 16px; margin-top: 1px; white-space: nowrap; color: #000; }
.item.on { background: #cecece; border-left: 5px solid #000; padding-left: 0; font-weight: 700; }
.graph { flex: 1; position: relative; background: #eaf7f3; border-left: 2px solid #777; border-top: 1px solid #666; overflow: hidden; margin-left: 0; }
.backdrop { position: absolute; left: 0; top: 0; }
.ver { position: absolute; right: 0; top: 2px; font: 10.200px "Liberation Mono", monospace; color: #11128a; }
.node { position: absolute; box-sizing: border-box; border: 1px solid #a4a9b2; border-right: 2px solid #929aa8; border-bottom: 2px solid #929aa8; background: linear-gradient(160deg, #fff 5%, #dfe8fa 55%, #c6d5f4); display: flex; font: 7.950px "Noto Sans CJK SC", sans-serif; color: #1c1c1c; }
.ins, .outs { display: flex; flex-direction: column; justify-content: space-around; }
.ins { flex: none; }
.in, .out { display: flex; align-items: center; height: 10px; white-space: nowrap; }
.in span { margin-left: 1px; line-height: 10px; margin-top: -2px; }
.out span { margin-top: -2px; }
.in .red { background: #f08f9a; width: 71px; font-weight: 700; }
.in .green { background: #8bc59b; font-weight: 700; width: 39px; }
.ins .red { min-width: 0; max-width: calc(100% - 5px); }
.in b, .out b { width: 2px; height: 5px; border: 1px solid #9aa0a8; border-left: 0; border-radius: 0 4px 4px 0; background: #f4f7f7; box-sizing: border-box; flex: none; }
.in b { margin-left: -1px; }
.out b { margin-right: -3px; margin-left: 2px; width: 3px; height: 7px; }
.out { justify-content: flex-end; }
.outs { flex: 1; }
.band { width: 15px; flex: none; background: linear-gradient(170deg, #e0eafa, #a9c2f3 60%, #81a4ec); display: flex; align-items: center; justify-content: center; }
.band span { writing-mode: vertical-rl; font-weight: 700; font-size: 10px; line-height: 15px; white-space: nowrap; color: #000; font-family: "Noto Sans CJK SC", sans-serif; }
.slider { position: absolute; }
.s-name { font: 700 9.800px "Noto Sans CJK SC", sans-serif; }
.s-val { font: 300 9px "Open Sans", sans-serif; fill: #66718c; text-anchor: middle; }
.foot { position: absolute; left: 535px; top: 795px; font-size: 4px; line-height: 5px; color: #444; }
</style>
